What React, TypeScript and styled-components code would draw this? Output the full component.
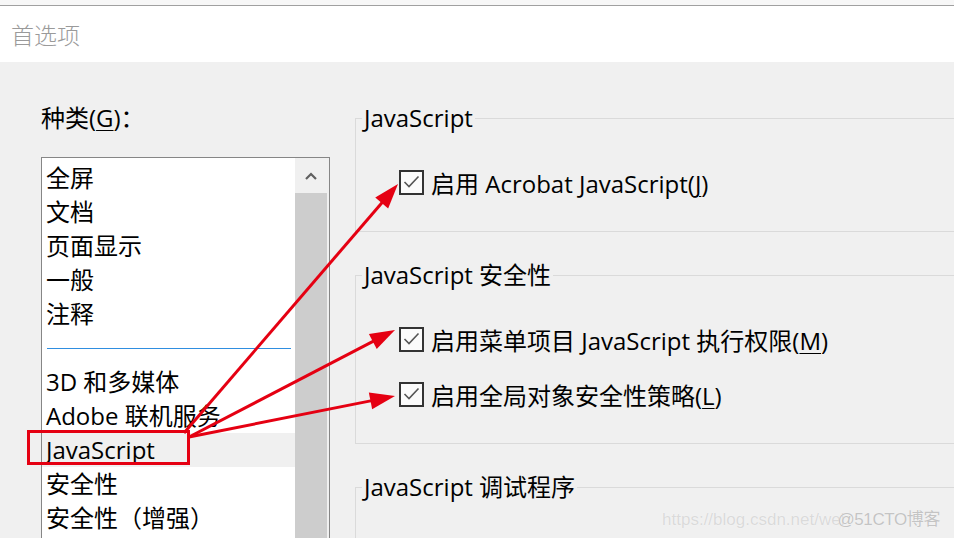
import React from "react";
import styled, { createGlobalStyle } from "styled-components";

const Global = createGlobalStyle`
  html, body { margin: 0; padding: 0; background: #f0f0f0; }
  body { width: 954px; height: 538px; overflow: hidden; }
  * { box-sizing: border-box; }
`;

const FONT = `"Open Sans", "Noto Sans CJK SC", sans-serif`;

const Page = styled.div`
  position: relative;
  width: 954px;
  height: 538px;
  overflow: hidden;
  font-family: ${FONT};
  color: #000;
  display: flex;
  flex-direction: column;
`;

const TopStrip = styled.div`
  height: 6px;
  background: #f7f7f7;
  border-bottom: 1px solid #a0a0a0;
  flex: none;
`;

const TitleBar = styled.div`
  height: 56px;
  background: #fff;
  display: flex;
  align-items: center;
  padding-left: 11px;
  flex: none;
`;

const Title = styled.div`
  font-size: 23px;
  color: #9a9a9a;
  font-weight: 300;
`;

const Body = styled.div`
  flex: 1;
  background: #f0f0f0;
  display: flex;
  padding: 39px 0 0 41px;
  gap: 25px;
  min-height: 0;
`;

const LeftCol = styled.div`
  width: 289px;
  flex: none;
  display: flex;
  flex-direction: column;
  gap: 22px;
`;

const FieldLabel = styled.div`
  font-size: 24px;
  line-height: 34px;
  & u { text-decoration-thickness: 1px; text-underline-offset: 3px; }
`;

const ListBox = styled.div`
  flex: 1;
  border: 1px solid #868686;
  border-bottom: none;
  background: #fff;
  display: flex;
  min-height: 0;
  overflow: hidden;
`;

const List = styled.div`
  flex: 1;
  padding-top: 3px;
`;

const Item = styled.div<{ $selected?: boolean }>`
  height: 34px;
  line-height: 34px;
  font-size: 24px;
  padding-left: 4px;
  white-space: nowrap;
  background: ${(p) => (p.$selected ? "#f0f0f0" : "transparent")};
`;

const Separator = styled.div`
  height: 34px;
  display: flex;
  align-items: center;
  padding: 0 4px 0 5px;
  &::after {
    content: "";
    flex: 1;
    height: 1px;
    background: #2f8ee0;
  }
`;

const ScrollBar = styled.div`
  width: 34px;
  flex: none;
  background: #f0f0f0;
  display: flex;
  flex-direction: column;
  padding-right: 2px;
`;

const ScrollButton = styled.div`
  height: 35px;
  display: flex;
  align-items: center;
  justify-content: center;
  color: #606060;
`;

const Thumb = styled.div`
  flex: 1;
  background: #cdcdcd;
`;

const RightCol = styled.div`
  width: 700px;
  flex: none;
  display: flex;
  flex-direction: column;
`;

const Group = styled.fieldset<{ $pb: number; $mt: number }>`
  margin: ${(p) => p.$mt}px 0 0 0;
  border: 1px solid #dadada;
  padding: 30px 0 ${(p) => p.$pb}px 6px;
  min-width: 0;
`;

const Legend = styled.legend`
  font-size: 24px;
  line-height: 34px;
  padding: 0 2px;
  white-space: nowrap;
`;

const Options = styled.div`
  display: flex;
  flex-direction: column;
  gap: 21px;
  padding-left: 37px;
`;

const CheckRow = styled.label`
  display: flex;
  align-items: center;
  gap: 7px;
  height: 34px;
  font-size: 24px;
  white-space: nowrap;
  & u { text-decoration-thickness: 1px; text-underline-offset: 3px; }
`;

const Box = styled.span`
  width: 25px;
  height: 25px;
  border: 2px solid #333;
  background: #fbfbfb;
  display: flex;
  align-items: center;
  justify-content: center;
  flex: none;
`;

const Overlay = styled.svg`
  position: absolute;
  left: 0;
  top: 0;
  pointer-events: none;
`;

const Watermark = styled.div`
  position: absolute;
  right: 14px;
  bottom: 8px;
  font-family: "Liberation Sans", "Noto Sans CJK SC", sans-serif;
  font-size: 17px;
  white-space: nowrap;
  color: #dadada;
  text-shadow: 0 0 1px #fff;
  & span { color: #c4c4c4; margin-left: -7px; letter-spacing: -0.4px; }
`;

const Check = () => (
  <Box>
    <svg width="17" height="14" viewBox="0 0 17 14">
      <polyline points="1.5,7 6,11.5 15.5,1.5" fill="none" stroke="#555" strokeWidth="1.6" />
    </svg>
  </Box>
);

type Pt = [number, number];
const RED = "#e50012";

function Arrow({ from, to }: { from: Pt; to: Pt }) {
  const dx = to[0] - from[0];
  const dy = to[1] - from[1];
  const len = Math.hypot(dx, dy);
  const ux = dx / len;
  const uy = dy / len;
  const L = 25;
  const W = 8.5;
  const bx = to[0] - ux * L;
  const by = to[1] - uy * L;
  const px = -uy;
  const py = ux;
  const pts = `${to[0]},${to[1]} ${bx + px * W},${by + py * W} ${bx - px * W},${by - py * W}`;
  return (
    <g>
      <line x1={from[0]} y1={from[1]} x2={bx + ux * 4} y2={by + uy * 4} stroke={RED} strokeWidth={3} />
      <polygon points={pts} fill={RED} />
    </g>
  );
}

export default function App() {
  const items1 = ["全屏", "文档", "页面显示", "一般", "注释"];
  const items2 = ["3D 和多媒体", "Adobe 联机服务", "JavaScript", "安全性", "安全性（增强）"];
  return (
    <>
      <Global />
      <Page>
        <TopStrip />
        <TitleBar>
          <Title>首选项</Title>
        </TitleBar>
        <Body>
          <LeftCol>
            <FieldLabel>
              种类(<u>G</u>)：
            </FieldLabel>
            <ListBox>
              <List>
                {items1.map((t) => (
                  <Item key={t}>{t}</Item>
                ))}
                <Separator />
                {items2.map((t) => (
                  <Item key={t} $selected={t === "JavaScript"}>
                    {t}
                  </Item>
                ))}
              </List>
              <ScrollBar>
                <ScrollButton>
                  <svg width="12" height="8" viewBox="0 0 12 8">
                    <polyline points="1,7 6,2 11,7" fill="none" stroke="currentColor" strokeWidth="2.2" />
                  </svg>
                </ScrollButton>
                <Thumb />
              </ScrollBar>
            </ListBox>
          </LeftCol>
          <RightCol>
            <Group $mt={0} $pb={32}>
              <Legend>JavaScript</Legend>
              <Options>
                <CheckRow>
                  <Check />
                  <span>
                    启用 Acrobat JavaScript(<u>J</u>)
                  </span>
                </CheckRow>
              </Options>
            </Group>
            <Group $mt={26} $pb={32}>
              <Legend>JavaScript 安全性</Legend>
              <Options>
                <CheckRow>
                  <Check />
                  <span>
                    启用菜单项目 JavaScript 执行权限(<u>M</u>)
                  </span>
                </CheckRow>
                <CheckRow>
                  <Check />
                  <span>
                    启用全局对象安全性策略(<u>L</u>)
                  </span>
                </CheckRow>
              </Options>
            </Group>
            <Group $mt={26} $pb={100}>
              <Legend>JavaScript 调试程序</Legend>
            </Group>
          </RightCol>
        </Body>
        <Overlay width={954} height={538} viewBox="0 0 954 538">
          <rect x={28.5} y={431.5} width={160} height={32} fill="none" stroke={RED} strokeWidth={3} />
          <Arrow from={[184, 433]} to={[398, 184]} />
          <Arrow from={[189, 437]} to={[395, 330]} />
          <Arrow from={[189, 437]} to={[395, 396]} />
        </Overlay>
        <Watermark>
          https://blog.csdn.net/wei<span>@51CTO博客</span>
        </Watermark>
      </Page>
    </>
  );
}
